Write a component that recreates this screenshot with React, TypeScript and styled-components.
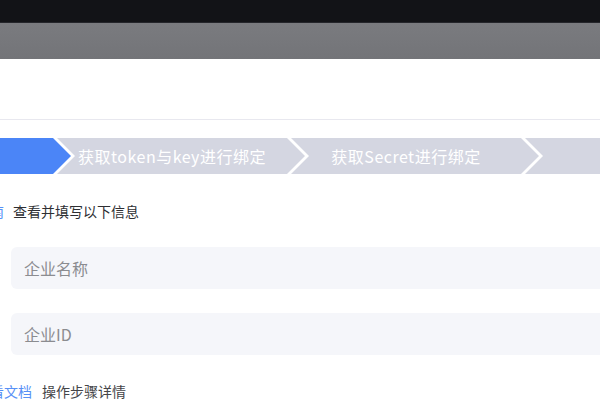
import React from 'react'
import styled, { createGlobalStyle } from 'styled-components'

const GlobalStyle = createGlobalStyle`
	html, body {
		margin: 0;
		padding: 0;
		width: 600px;
		height: 400px;
		overflow: hidden;
		background: #fff;
		font-family: "Noto Sans CJK SC", "Noto Sans", sans-serif;
	}
`

const Screen = styled.div`
	display: flex;
	flex-direction: column;
	width: 600px;
	height: 400px;
	overflow: hidden;
`

const TopBar = styled.div`
	height: 22px;
	flex: none;
	background: #121317;
	border-bottom: 1px solid #25262b;
`

const Overlay = styled.div`
	height: 36px;
	flex: none;
	background: linear-gradient(#7a7b7f, #737478);
`

const Dialog = styled.div`
	display: flex;
	flex-direction: column;
	flex: 1;
	background: #fff;
`

const Header = styled.div`
	height: 60px;
	flex: none;
	border-bottom: 1px solid #e8e8ef;
`

const Body = styled.div`
	display: flex;
	flex-direction: column;
	padding: 18px 0 0 11px;
`

const Steps = styled.div`
	display: flex;
	height: 36px;
	margin-left: -188px;
`

const Step = styled.div<{ $active?: boolean }>`
	flex: none;
	width: 248px;
	height: 36px;
	margin-right: -14px;
	padding-right: 18px;
	box-sizing: border-box;
	display: flex;
	align-items: center;
	justify-content: center;
	background: ${p => (p.$active ? '#4b85f7' : '#d4d6e1')};
	color: #fff;
	font-size: 16px;
	letter-spacing: 0.5px;
	clip-path: polygon(0 0, calc(100% - 18px) 0, 100% 50%, calc(100% - 18px) 100%, 0 100%, 18px 50%);
`

const TipRow = styled.div<{ $gap: number; $top: number }>`
	display: flex;
	align-items: center;
	gap: ${p => p.$gap}px;
	margin: ${p => p.$top}px 0 0 -35px;
	height: 20px;
	font-size: 14px;
	white-space: nowrap;
`

const Link = styled.span`
	color: #5790f6;
`

const Note = styled.span<{ $muted?: boolean }>`
	color: ${p => (p.$muted ? '#444548' : '#2e2f33')};
`

const Field = styled.input<{ $top: number }>`
	width: 640px;
	height: 42px;
	box-sizing: border-box;
	border: none;
	outline: none;
	border-radius: 6px;
	background: #f5f6fa;
	padding: 0 13px;
	font-family: inherit;
	font-size: 16px;
	color: #333;
	margin-top: ${p => p.$top}px;
	&::placeholder {
		color: #8b8c90;
	}
`

export default function App() {
	const steps = ['', '获取token与key进行绑定', '获取Secret进行绑定', '']

	return (
		<Screen>
			<GlobalStyle />
			<TopBar />
			<Overlay />
			<Dialog>
				<Header />
				<Body>
					<Steps>
						{ steps.map((s, i) => (
							<Step key={ i } $active={ i === 0 }>{ s }</Step>
						)) }
					</Steps>
					<TipRow $gap={ 9 } $top={ 27 }>
						<Link>指南</Link>
						<Note>查看并填写以下信息</Note>
					</TipRow>
					<Field $top={ 26 } placeholder="企业名称" />
					<Field $top={ 24 } placeholder="企业ID" />
					<TipRow $gap={ 10 } $top={ 26 }>
						<Link>查看文档</Link>
						<Note $muted>操作步骤详情</Note>
					</TipRow>
				</Body>
			</Dialog>
		</Screen>
	)
}
